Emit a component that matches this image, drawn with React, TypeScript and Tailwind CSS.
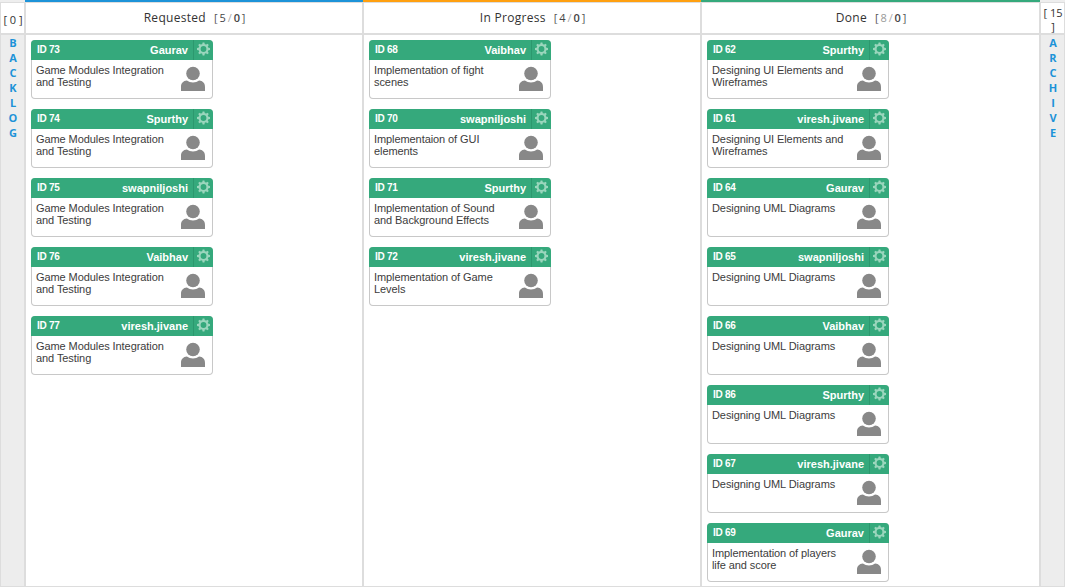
import React from "react";

type Task = { id: number; owner: string; text: string[] };
type Column = { title: string; count: number; strong?: boolean; tasks: Task[] };

const game = ["Game Modules Integration", "and Testing"];
const uml = ["Designing UML Diagrams"];
const ui = ["Designing UI Elements and", "Wireframes"];

const columns: Column[] = [
  {
    title: "Requested",
    count: 5,
    strong: true,
    tasks: [
      { id: 73, owner: "Gaurav", text: game },
      { id: 74, owner: "Spurthy", text: game },
      { id: 75, owner: "swapniljoshi", text: game },
      { id: 76, owner: "Vaibhav", text: game },
      { id: 77, owner: "viresh.jivane", text: game },
    ],
  },
  {
    title: "In Progress",
    count: 4,
    strong: true,
    tasks: [
      { id: 68, owner: "Vaibhav", text: ["Implementation of fight", "scenes"] },
      { id: 70, owner: "swapniljoshi", text: ["Implementaion of GUI", "elements"] },
      { id: 71, owner: "Spurthy", text: ["Implementation of Sound", "and Background Effects"] },
      { id: 72, owner: "viresh.jivane", text: ["Implementation of Game", "Levels"] },
    ],
  },
  {
    title: "Done",
    count: 8,
    tasks: [
      { id: 62, owner: "Spurthy", text: ui },
      { id: 61, owner: "viresh.jivane", text: ui },
      { id: 64, owner: "Gaurav", text: uml },
      { id: 65, owner: "swapniljoshi", text: uml },
      { id: 66, owner: "Vaibhav", text: uml },
      { id: 86, owner: "Spurthy", text: uml },
      { id: 67, owner: "viresh.jivane", text: uml },
      { id: 69, owner: "Gaurav", text: ["Implementation of players", "life and score"] },
    ],
  },
];

const teeth = [0, 45, 90, 135, 180, 225, 270, 315];

function Gear() {
  return (
    <svg className="h-[14px] w-[13px]" viewBox="-6.5 -7 13 14">
      <circle r="3.9" fill="none" stroke="#9bd6bd" strokeWidth="2" />
      {teeth.map((a) => (
        <path key={a} d="M-1.4 -4.2 L-0.9 -6.5 H0.9 L1.4 -4.2 Z" fill="#9bd6bd" transform={`rotate(${a})`} />
      ))}
    </svg>
  );
}

function Avatar() {
  return (
    <svg className="h-[26px] w-[26px] shrink-0" viewBox="0 0 26 26">
      <circle cx="13" cy="7.5" r="6.8" fill="#888" />
      <path d="M1 25V21C1 17.2 3.2 14.9 6.9 14.6C8.6 15.9 10.6 16.5 13 16.5C15.4 16.5 17.4 15.9 19.1 14.6C22.8 14.9 25 17.2 25 21V25Z" fill="#888" />
    </svg>
  );
}

function Card({ task }: { task: Task }) {
  return (
    <article className="flex h-[59px] w-[182px] shrink-0 flex-col overflow-hidden rounded-[4px] bg-[#c8c8c8] font-['Liberation_Sans',Arial,sans-serif]">
      <div className="flex h-5 shrink-0 items-stretch bg-[#35a97c] font-bold text-white">
        <span className="pl-1.5 text-[10px] leading-[20px] tracking-[-0.3px]">ID {task.id}</span>
        <span className="ml-auto pr-[5px] text-[11px] leading-[21px]">{task.owner}</span>
        <span className="flex w-[20px] justify-center border-l border-[#2c986e] pt-[2px]">
          <Gear />
        </span>
      </div>
      <div className="mx-px mb-px flex flex-1 justify-between rounded-b-[3px] bg-white">
        <p className="pt-[4px] pl-1 text-[11px] leading-[12px] tracking-[-0.08px] whitespace-nowrap text-[#3c3c3c]">
          {task.text.map((line) => (
            <span key={line} className="block">
              {line}
            </span>
          ))}
        </p>
        <div className="pt-[6px] pr-[6px]">
          <Avatar />
        </div>
      </div>
    </article>
  );
}

function Letters({ word }: { word: string }) {
  return (
    <div className="flex flex-1 flex-col items-center bg-[#ededed] pl-px text-[11px] font-bold text-[#1d93d8]">
      {word.split("").map((c, i) => (
        <span key={i} className="h-[15px] leading-[15px]">
          {c}
        </span>
      ))}
    </div>
  );
}

export default function App() {
  return (
    <div className="h-[588px] w-full overflow-hidden bg-white font-['Open_Sans',sans-serif] text-[#333]">
      <div className="flex h-[587px] w-[1065px] flex-col border-b border-[#ddd]">
        <div className="flex h-[2px] shrink-0">
          <div className="w-[25px] bg-[#eee]" />
          <div className="w-[338px] bg-[#1d93d8]" />
          <div className="w-[338px] bg-[#ffa010]" />
          <div className="w-[339px] bg-[#35a97c]" />
          <div className="flex-1 bg-[#eee]" />
        </div>
        <div className="flex flex-1 border-x border-t border-[#ddd]">
          <aside className="flex w-[23px] flex-col">
            <div className="h-[32px] border-b-2 border-[#ddd] pt-[9px] pl-px text-center text-[11px] leading-[15px] whitespace-nowrap">[ 0 ]</div>
            <Letters word="BACKLOG" />
          </aside>
          {columns.map((col, i) => (
            <section
              key={col.title}
              className={`flex flex-col border-l-2 border-[#ddd] ${i === 2 ? "w-[339px]" : "w-[338px]"}`}
            >
              <header className="flex h-[32px] shrink-0 items-start justify-center border-b-2 border-[#ddd] pt-[7px] pl-[3px] leading-[16px]">
                <h2 className="text-[12px] tracking-[0.3px]">{col.title}</h2>
                <span className="ml-2 text-[11px] tracking-[1.9px] text-[#555]">
                  [<span className={col.strong ? "text-[#444]" : "text-[#999]"}>{col.count}</span>
                  <span className="text-[#aaa]">/</span>
                  <span className="font-semibold text-[#444]">0</span>]
                </span>
              </header>
              <div className="flex flex-col gap-[10px] pt-[5px] pl-[5px]">
                {col.tasks.map((t) => (
                  <Card key={t.id} task={t} />
                ))}
              </div>
            </section>
          ))}
          <aside className="flex flex-1 flex-col border-l-2 border-[#ddd]">
            <div className="h-[32px] border-b-2 border-[#ddd] pt-[2px] pl-px text-center text-[11px] leading-[15px]">
              <div className="whitespace-nowrap">[ 15</div>
              <div className="leading-[14px]">]</div>
            </div>
            <Letters word="ARCHIVE" />
          </aside>
        </div>
      </div>
    </div>
  );
}
